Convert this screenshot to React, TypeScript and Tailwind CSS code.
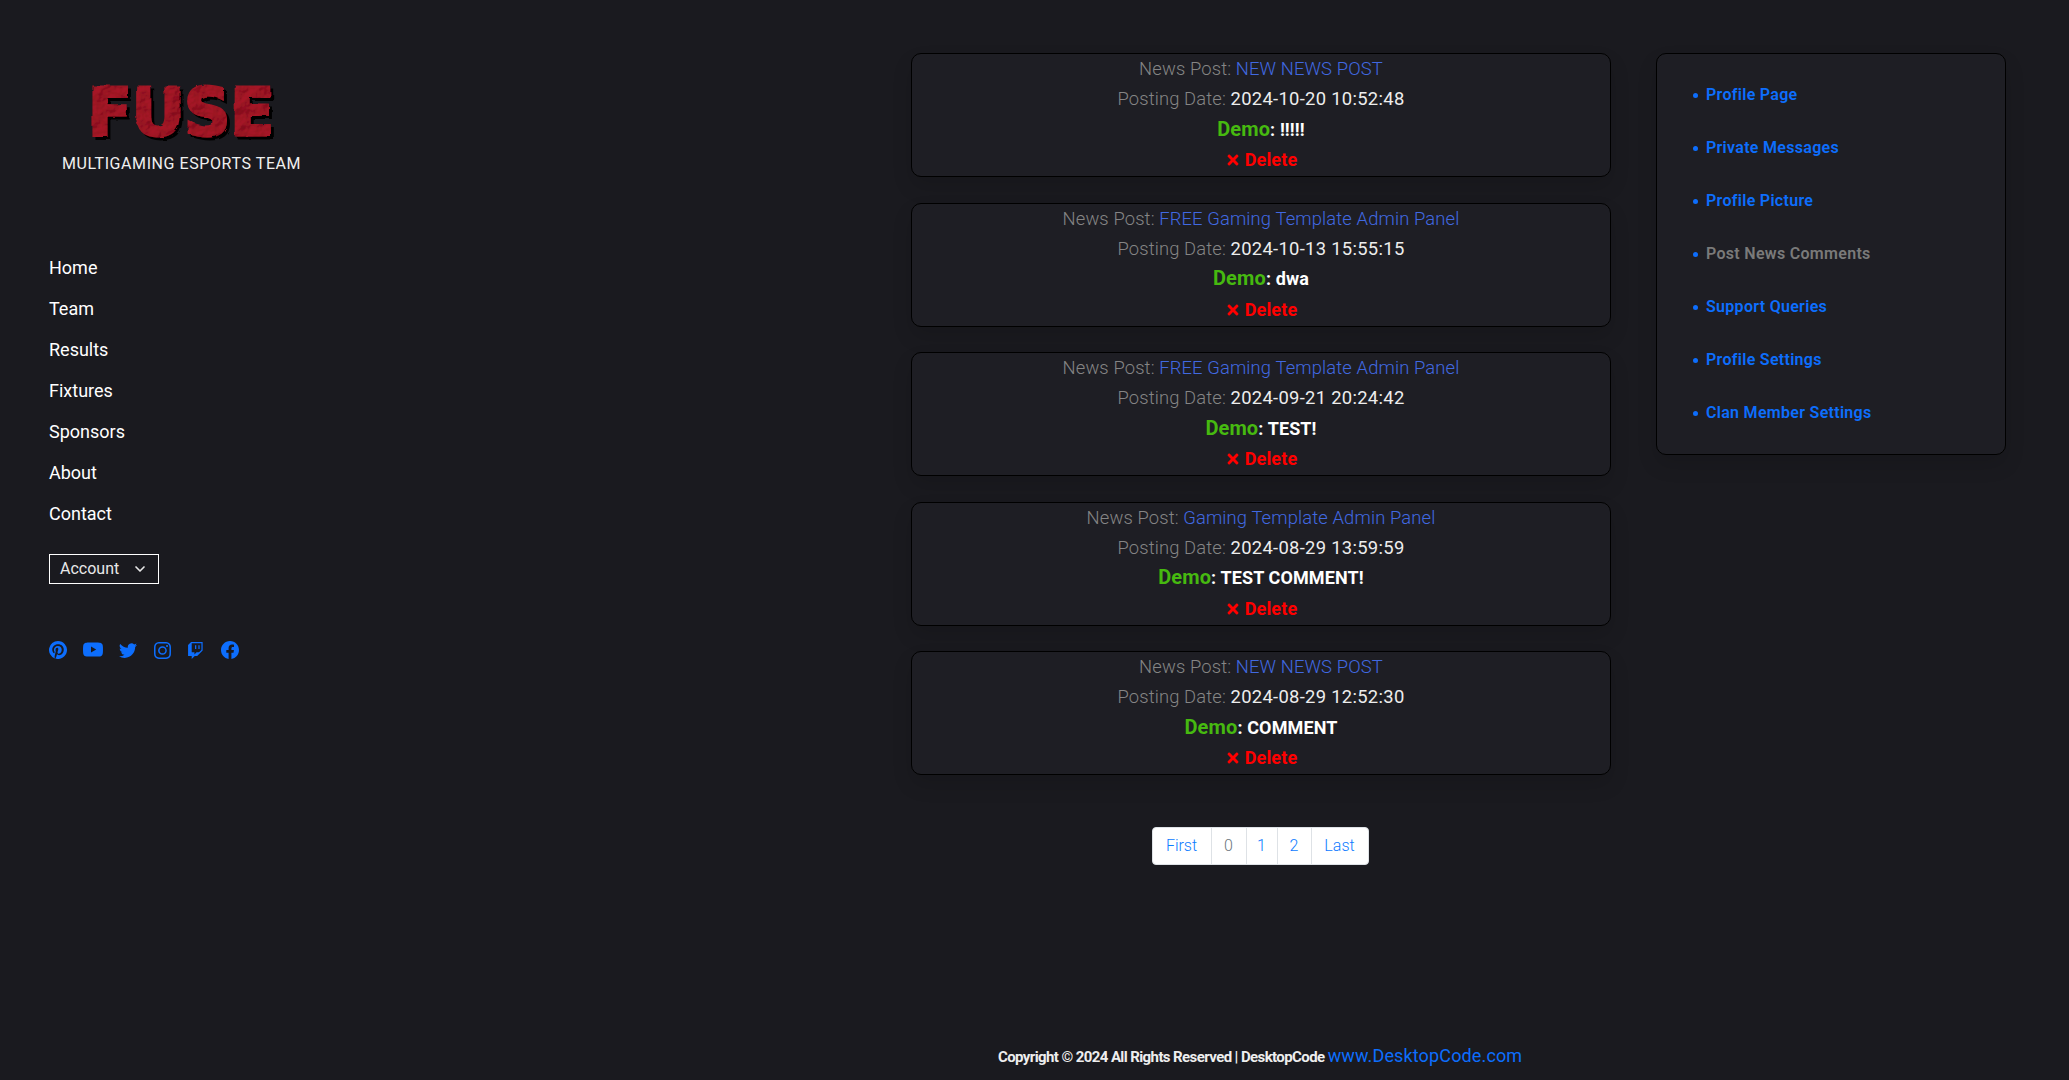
import { BsFacebook, BsInstagram, BsPinterest, BsTwitch, BsTwitter, BsYoutube } from 'react-icons/bs'
import { FaTimes } from 'react-icons/fa'
import { FiChevronDown } from 'react-icons/fi'

const posts = [
  { title: 'NEW NEWS POST', date: '2024-10-20 10:52:48', comment: '!!!!!' },
  { title: 'FREE Gaming Template Admin Panel', date: '2024-10-13 15:55:15', comment: 'dwa' },
  { title: 'FREE Gaming Template Admin Panel', date: '2024-09-21 20:24:42', comment: 'TEST!' },
  { title: 'Gaming Template Admin Panel', date: '2024-08-29 13:59:59', comment: 'TEST COMMENT!' },
  { title: 'NEW NEWS POST', date: '2024-08-29 12:52:30', comment: 'COMMENT' },
]

const navItems = ['Home', 'Team', 'Results', 'Fixtures', 'Sponsors', 'About', 'Contact']

const accountLinks = [
  { label: 'Profile Page', active: false },
  { label: 'Private Messages', active: false },
  { label: 'Profile Picture', active: false },
  { label: 'Post News Comments', active: true },
  { label: 'Support Queries', active: false },
  { label: 'Profile Settings', active: false },
  { label: 'Clan Member Settings', active: false },
]

function Logo() {
  return (
    <svg width="200" height="66" viewBox="0 0 200 66" className="block overflow-visible">
      <defs>
        <filter id="rough" x="-5%" y="-10%" width="115%" height="130%">
          <feTurbulence type="fractalNoise" baseFrequency="0.09" numOctaves="3" seed="4" result="noise" />
          <feDisplacementMap in="SourceGraphic" in2="noise" scale="3" result="shape" />
          <feDiffuseLighting in="noise" surfaceScale="2.4" lightingColor="#a81628" result="light">
            <feDistantLight azimuth="235" elevation="60" />
          </feDiffuseLighting>
          <feComposite in="light" in2="shape" operator="in" result="tex" />
          <feOffset in="shape" dx="3" dy="3" result="off" />
          <feFlood floodColor="#000" />
          <feComposite in2="off" operator="in" result="shadow" />
          <feMerge>
            <feMergeNode in="shadow" />
            <feMergeNode in="tex" />
          </feMerge>
        </filter>
      </defs>
      <text
        x="0"
        y="57"
        fontFamily="'DejaVu Sans', sans-serif"
        fontWeight="700"
        fontSize="66"
        textLength="186"
        lengthAdjust="spacingAndGlyphs"
        fill="#a8182a"
        stroke="#a8182a"
        strokeWidth="3"
        filter="url(#rough)"
      >
        FUSE
      </text>
    </svg>
  )
}

function PostCard({ title, date, comment }: { title: string; date: string; comment: string }) {
  return (
    <div className="h-[124px] mb-[25.5px] pb-1 rounded-[10px] border border-black bg-[#1e1e24] shadow-[0_10px_20px_rgba(0,0,0,0.12)] text-center text-[18.4px] tracking-[0.12px] leading-[30.5px] font-light text-[#858585]">
      <div className="leading-[29px]">
        News Post: <a className="text-[#4169e1]">{title}</a>
      </div>
      <div className="pt-[1px] -mb-[1px]">
        Posting Date: <span className="font-normal tracking-[0.3px] text-[#ededed]">{date}</span>
      </div>
      <div className="font-bold text-[18px] text-white">
        <span className="text-[20px] text-[#46b910]">Demo</span>: {comment}
      </div>
      <div className="flex items-center justify-center gap-[4px] text-[18px] font-bold text-[#ff0000]">
        <FaTimes size={16} />
        Delete
      </div>
    </div>
  )
}

export default function App() {
  return (
    <div className="h-[1080px] overflow-hidden bg-[#1a1a1f] font-['Roboto',sans-serif] flex flex-col">
      <div className="flex flex-1">
        <aside className="w-[911px] pl-[49px] pt-[78px] shrink-0">
          <div className="ml-[39px]">
            <Logo />
          </div>
          <div className="mt-[8px] ml-[13px] text-[16px] tracking-[0.58px] leading-[24px] text-[#f0f0f0]">
            MULTIGAMING ESPORTS TEAM
          </div>
          <nav className="mt-[78px] flex flex-col gap-[13px] text-[18px] leading-[28px] text-white">
            {navItems.map((item) => (
              <a key={item}>{item}</a>
            ))}
          </nav>
          <button className="mt-[26px] w-[110px] h-[30px] pl-[10px] pr-[10px] flex items-center justify-between border-[1.5px] border-white text-[16px] text-[#e8e8e8]">
            Account
            <FiChevronDown size={16} strokeWidth={2.5} />
          </button>
          <div className="mt-[56px] flex items-center text-[#0d6efd]">
            <BsPinterest size={18} className="mr-[16px]" />
            <BsYoutube size={20} className="mr-[16px]" />
            <BsTwitter size={18} className="mr-[17px]" />
            <BsInstagram size={17} className="mr-[16px]" />
            <BsTwitch size={17} className="mr-[17px]" />
            <BsFacebook size={18} />
          </div>
        </aside>

        <main className="w-[700px] pt-[53px] shrink-0">
          {posts.map((p) => (
            <PostCard key={p.date} {...p} />
          ))}
          <div className="mt-[52px] flex justify-center pr-[2px]">
            <div className="flex h-[38px] rounded bg-white text-[16px] leading-[36px] font-light text-[#0d7bff] border border-[#dee2e6]">
              <a className="w-[59px] text-center border-r border-[#dee2e6]">First</a>
              <span className="w-[35px] text-center border-r border-[#dee2e6] text-[#6c757d]">0</span>
              <a className="w-[31px] text-center border-r border-[#dee2e6]">1</a>
              <a className="w-[34px] text-center border-r border-[#dee2e6]">2</a>
              <a className="w-[56px] text-center">Last</a>
            </div>
          </div>
        </main>

        <aside className="ml-[45px] pt-[53px] w-[350px] shrink-0">
          <div className="h-[402px] rounded-[10px] border border-black bg-[#1e1e24] shadow-[0_10px_20px_rgba(0,0,0,0.12)] pl-[36px] pt-[30px]">
            <ul className="flex flex-col gap-[31px] text-[16px] tracking-[0.3px] leading-[22px] font-semibold">
              {accountLinks.map((l) => (
                <li key={l.label} className="flex items-center gap-2">
                  <span className="size-[5px] rounded-full bg-[#0d6efd]" />
                  <a className={l.active ? 'text-[#7a7a7a]' : 'text-[#0d6efd]'}>{l.label}</a>
                </li>
              ))}
            </ul>
          </div>
        </aside>
      </div>

      <footer className="pb-[11px] pl-[998px] text-[15px] tracking-[-0.6px] leading-[24px] font-bold text-[#eeeeee] whitespace-nowrap">
        Copyright © 2024 All Rights Reserved | DesktopCode{' '}
        <a className="text-[18px] tracking-[0.14px] font-normal text-[#0d6efd]">www.DesktopCode.com</a>
      </footer>
    </div>
  )
}
